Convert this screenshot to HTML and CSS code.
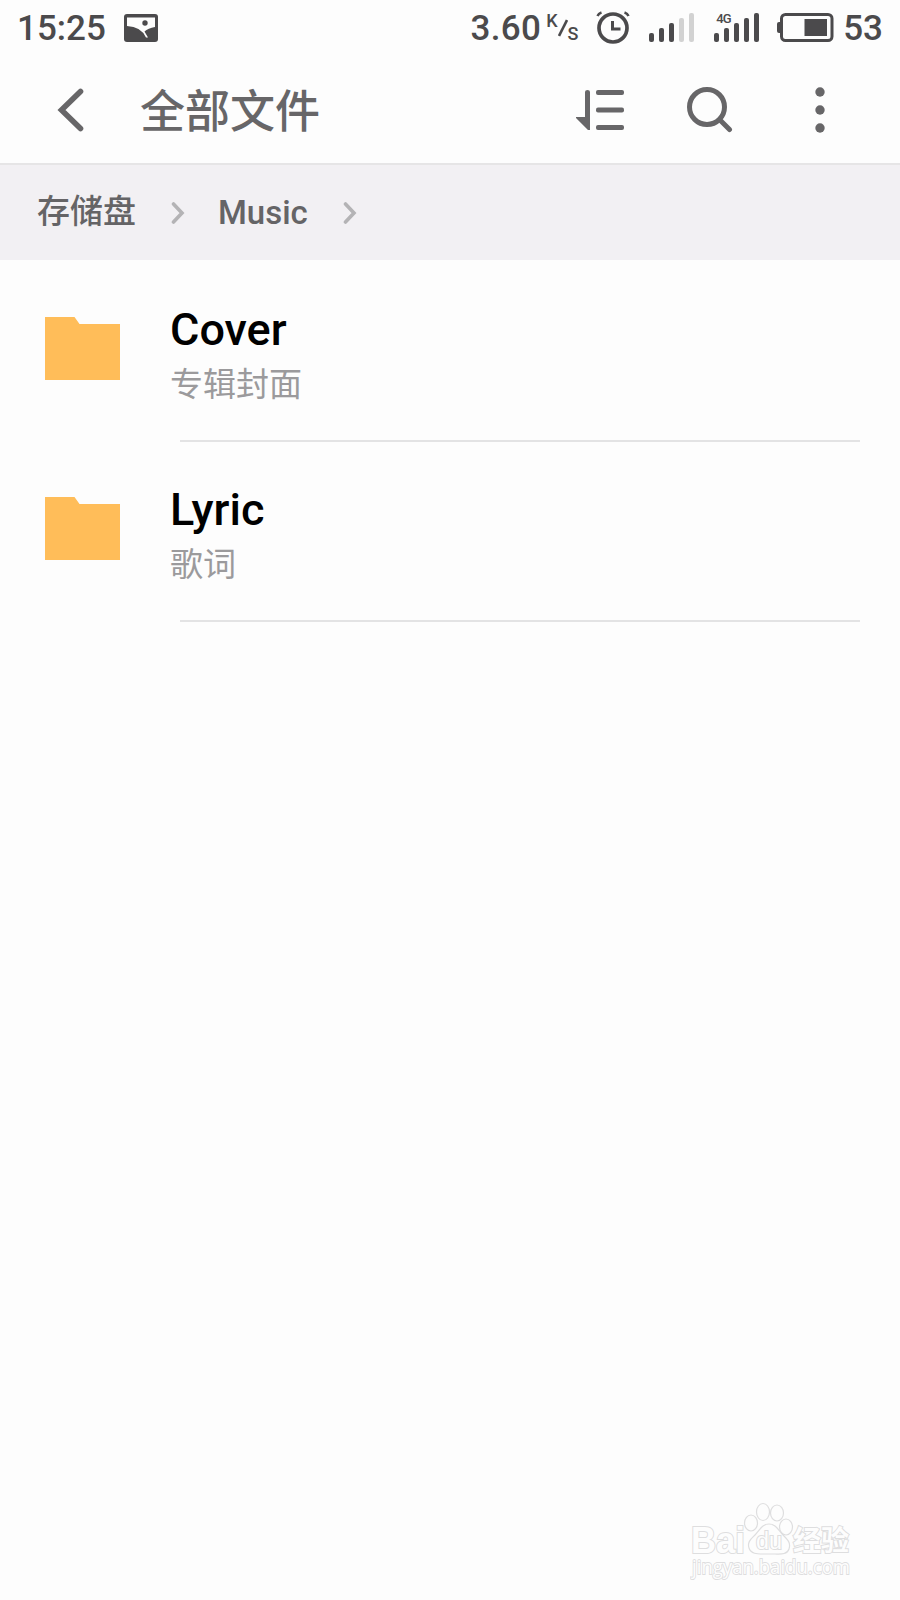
FILE: index.html
```html
<!DOCTYPE html>
<html lang="zh-CN">
<head>
  <meta charset="UTF-8">
  <meta name="viewport" content="width=device-width, initial-scale=1.0">
  <title>全部文件</title>
  <link rel="stylesheet" href="styles.css">
</head>
<body>
  <div class="status-bar">
    <span class="time">15:25</span>
    <svg class="picture-icon" width="34" height="28" viewBox="0 0 34 28">
      <rect x="0" y="0" width="34" height="28" rx="3" fill="#4b4a4c"/>
      <path d="M3 3.500h28v9.500Q24 14 20.500 17.500L24 23.500H22Q17 12.500 3 12z" fill="#fdfdfd"/>
      <circle cx="21" cy="9" r="2.700" fill="#4b4a4c"/>
    </svg>
    <span class="speed">3.60</span>
    <span class="unit"><span class="unit-k">K</span><svg width="10" height="18" viewBox="0 0 10 18"><path d="M9 1L1 17" stroke="#4b4a4c" stroke-width="2.600"/></svg><span class="unit-s">S</span></span>
    <svg class="alarm-icon" width="34" height="34" viewBox="0 0 34 34" fill="none" stroke="#4b4a4c">
      <circle cx="17" cy="18" r="14" stroke-width="3.700"/>
      <path d="M16.500 11v8h8" stroke-width="3"/>
      <path d="M1.500 6Q2.500 3.500 5.500 2.500M28.500 2.500Q31.500 3.500 32.500 6" stroke-width="2.500"/>
    </svg>
    <svg class="signal-icon" width="46" height="30" viewBox="0 0 46 30" fill="#4b4a4c">
      <rect x="0" y="20" width="5" height="9" rx="2"/>
      <rect x="10" y="15" width="5" height="14" rx="2"/>
      <rect x="20" y="10" width="5" height="19" rx="2"/>
      <rect x="30" y="5" width="5" height="24" rx="2" fill="#d2d2d2"/>
      <rect x="40" y="0" width="5" height="29" rx="2" fill="#d2d2d2"/>
    </svg>
    <div class="signal-4g">
      <svg class="signal-icon" width="46" height="30" viewBox="0 0 46 30" fill="#4b4a4c">
        <rect x="0" y="20" width="5" height="9" rx="2"/>
        <rect x="10" y="15" width="5" height="14" rx="2"/>
        <rect x="20" y="10" width="5" height="19" rx="2"/>
        <rect x="30" y="5" width="5" height="24" rx="2"/>
        <rect x="40" y="0" width="5" height="29" rx="2"/>
      </svg>
      <span class="label-4g">4G</span>
    </div>
    <svg class="battery-icon" width="57" height="29" viewBox="0 0 57 29">
      <rect x="0" y="9" width="5" height="11" rx="2" fill="#4b4a4c"/>
      <rect x="4.500" y="1.500" width="50.500" height="26" rx="4" fill="none" stroke="#4b4a4c" stroke-width="3"/>
      <rect x="27.500" y="6" width="22.500" height="17" fill="#4b4a4c"/>
    </svg>
    <span class="battery-level">53</span>
  </div>

  <div class="header">
    <svg class="back-icon" width="28" height="44" viewBox="0 0 28 44">
      <path d="M23.500 3.500L4.500 22L23.500 40.500" fill="none" stroke="#676668" stroke-width="5.600" stroke-linecap="round"/>
    </svg>
    <h1>全部文件</h1>
    <svg class="sort-icon" width="48" height="40" viewBox="0 0 48 40" fill="#676668">
      <path d="M9 2q0-2 2.500-2T14 2v38h-2L0 28v-1h9z"/>
      <rect x="20" y="0" width="28" height="5" rx="2"/>
      <rect x="20" y="17.500" width="28" height="5" rx="2"/>
      <rect x="20" y="35" width="28" height="5" rx="2"/>
    </svg>
    <svg class="search-icon" width="46" height="46" viewBox="0 0 46 46" fill="none" stroke="#676668" stroke-width="5" stroke-linecap="round">
      <circle cx="20" cy="20" r="17.500"/>
      <path d="M33 33L42.500 42.500"/>
    </svg>
    <svg class="more-icon" width="10" height="46" viewBox="0 0 10 46" fill="#676668">
      <circle cx="5" cy="5" r="4.700"/>
      <circle cx="5" cy="23" r="4.700"/>
      <circle cx="5" cy="41" r="4.700"/>
    </svg>
  </div>

  <div class="breadcrumb">
    <span class="crumb crumb-cn">存储盘</span>
    <svg class="chevron" width="14" height="22" viewBox="0 0 14 22"><path d="M2.500 2L11 11L2.500 20"/></svg>
    <span class="crumb">Music</span>
    <svg class="chevron" width="14" height="22" viewBox="0 0 14 22"><path d="M2.500 2L11 11L2.500 20"/></svg>
  </div>

  <div class="file-list">
    <div class="file-item">
      <svg class="folder-icon" width="75" height="63" viewBox="0 0 75 63"><path d="M0 0h29.500l5 7H75v56H0z" fill="#ffbd59"/></svg>
      <div class="file-info">
        <p class="file-name">Cover</p>
        <p class="file-desc">专辑封面</p>
      </div>
    </div>
    <div class="file-item">
      <svg class="folder-icon" width="75" height="63" viewBox="0 0 75 63"><path d="M0 0h29.500l5 7H75v56H0z" fill="#ffbd59"/></svg>
      <div class="file-info">
        <p class="file-name">Lyric</p>
        <p class="file-desc">歌词</p>
      </div>
    </div>
  </div>

  <svg class="watermark" width="170" height="96" viewBox="0 0 170 96">
    <g class="outline">
      <ellipse cx="61" cy="23" rx="6.500" ry="8"/>
      <ellipse cx="73" cy="12" rx="6.500" ry="8.500"/>
      <ellipse cx="87" cy="13" rx="6.500" ry="8"/>
      <ellipse cx="96" cy="27" rx="6.500" ry="8"/>
      <path d="M79 24c7 0 9 6 14 11c5 5 8 8 6 14c-2 6-9 5-14 5h-12c-6 0-12 0-14-6c-2-6 2-9 6-13c5-5 7-11 14-11z"/>
      <text class="wm-logo" x="1" y="53" textLength="54" lengthAdjust="spacingAndGlyphs">Bai</text>
      <text class="wm-du" x="66" y="49" textLength="26" lengthAdjust="spacingAndGlyphs">du</text>
      <text class="wm-cn" x="103" y="51" textLength="56" lengthAdjust="spacingAndGlyphs">经验</text>
      <text class="wm-url" x="2" y="74" textLength="158" lengthAdjust="spacingAndGlyphs">jingyan.baidu.com</text>
    </g>
  </svg>
</body>
</html>
```
FILE: styles.css
```css
* {
  margin: 0;
  padding: 0;
  box-sizing: border-box;
}

body {
  font-family: Roboto, 'Noto Sans CJK SC', sans-serif;
  background-color: #fdfdfd;
  height: 1600px;
  overflow: hidden;
}

svg {
  display: block;
  flex-shrink: 0;
}

.status-bar {
  display: flex;
  align-items: center;
  height: 56px;
  padding: 0 17px 0 17px;
  color: #4b4a4c;
  font-size: 35px;
  font-weight: 500;
  line-height: 56px;
}

.time,
.speed,
.battery-level {
  padding-top: 1px;
}

.time {
  width: 107px;
}

.speed {
  width: 76px;
  margin-left: 313px;
  letter-spacing: 0.3px;
}

.unit {
  display: flex;
  align-items: center;
  width: 31px;
  margin-left: 0;
}

.unit-k {
  font-size: 18px;
  line-height: 18px;
  margin-top: -14px;
}

.unit-s {
  font-size: 18px;
  line-height: 18px;
  margin-top: 12px;
}

.alarm-icon {
  margin-left: 19px;
  margin-top: -2px;
}

.signal-icon {
  margin-left: 19px;
}

.signal-4g {
  position: relative;
}

.label-4g {
  position: absolute;
  left: 21px;
  top: -1px;
  font-size: 13px;
  line-height: 13px;
  letter-spacing: -0.8px;
}

.battery-icon {
  margin-left: 17px;
  margin-top: -1px;
}

.battery-level {
  margin-left: 9px;
}

.header {
  display: flex;
  align-items: center;
  height: 109px;
  padding: 0 70px 0 57px;
  border-bottom: 2px solid #e6e5e6;
}

.header h1 {
  width: 380px;
  margin-left: 55px;
  padding-top: 6px;
  color: #676668;
  font-size: 45px;
  font-weight: 500;
  line-height: 66px;
}

.sort-icon {
  margin-left: 56px;
}

.search-icon {
  margin-left: 63px;
}

.more-icon {
  margin-left: 82px;
}

.breadcrumb {
  display: flex;
  align-items: center;
  height: 95px;
  padding-left: 37px;
  background-color: #f2f0f3;
}

.crumb {
  color: #656466;
  font-size: 33px;
  font-weight: 500;
  line-height: 48px;
}

.crumb-cn {
  padding-bottom: 2px;
}

.chevron {
  margin: 0 33px 0 35px;
  fill: none;
  stroke: #b4b3b5;
  stroke-width: 3.6;
  stroke-linecap: round;
}

.file-item {
  display: flex;
  height: 180px;
  padding-right: 40px;
}

.folder-icon {
  margin: 57px 0 0 45px;
}

.file-info {
  flex: 1;
  height: 182px;
  margin-left: 50px;
  padding-top: 43px;
  background: linear-gradient(#e3e3e4, #e3e3e4) 10px 180px / 100% 2px no-repeat;
}

.file-name {
  color: #000;
  font-size: 45px;
  font-weight: 500;
  line-height: 54px;
}

.file-desc {
  margin-top: 4px;
  color: #9b9a9c;
  font-size: 33px;
  line-height: 48px;
}

.watermark {
  position: absolute;
  left: 690px;
  top: 1500px;
}

.outline {
  fill: #fdfdfd;
  stroke: #dededf;
  stroke-width: 1.2;
}

.outline text {
  paint-order: stroke;
  stroke-width: 2;
}

.wm-logo {
  font: bold 36px 'Liberation Sans', sans-serif;
}

.outline .wm-du {
  font: 23px 'Liberation Sans', sans-serif;
}

.wm-cn {
  font: bold 28px 'Noto Sans CJK SC', sans-serif;
}

.outline .wm-url {
  font: 20px 'Open Sans', sans-serif;
  stroke-width: 1.8;
}
```
